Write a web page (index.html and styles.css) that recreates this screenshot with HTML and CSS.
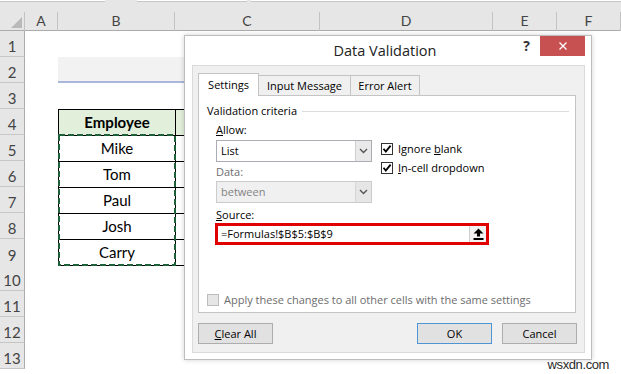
FILE: index.html
```html
<!DOCTYPE html>
<html lang="en">
<head>
    <meta charset="UTF-8">
    <meta name="viewport" content="width=device-width, initial-scale=1.0">
    <title>Data Validation</title>
    <link rel="stylesheet" href="styles.css">
</head>
<body>
    <div class="topbar">
        <span class="box name"></span>
        <span class="box fx"></span>
        <span class="box formula"></span>
    </div>

    <div class="sheet">
        <div class="row head">
            <div class="corner">
                <svg width="25" height="19" viewBox="0 0 25 19"><polygon points="22,5 22,16 11,16" fill="#b9b9b9"/></svg>
            </div>
            <div class="col">A</div>
            <div class="col">B</div>
            <div class="col">C</div>
            <div class="col">D</div>
            <div class="col">E</div>
            <div class="col">F</div>
        </div>
        <div class="row"><div class="num">1</div><div></div><div></div><div></div><div></div><div></div><div></div></div>
        <div class="row"><div class="num">2</div><div></div><div class="band"></div><div class="band"></div><div class="band"></div><div></div><div></div></div>
        <div class="row"><div class="num">3</div><div></div><div></div><div></div><div></div><div></div><div></div></div>
        <div class="row"><div class="num">4</div><div></div><div class="th">Employee</div><div class="th"></div><div></div><div></div><div></div></div>
        <div class="row"><div class="num">5</div><div></div><div class="td">Mike</div><div class="td"></div><div></div><div></div><div></div></div>
        <div class="row"><div class="num">6</div><div></div><div class="td">Tom</div><div class="td"></div><div></div><div></div><div></div></div>
        <div class="row"><div class="num">7</div><div></div><div class="td">Paul</div><div class="td"></div><div></div><div></div><div></div></div>
        <div class="row"><div class="num">8</div><div></div><div class="td">Josh</div><div class="td"></div><div></div><div></div><div></div></div>
        <div class="row"><div class="num">9</div><div></div><div class="td last">Carry</div><div class="td last"></div><div></div><div></div><div></div></div>
        <div class="row"><div class="num">10</div><div></div><div></div><div></div><div></div><div></div><div></div></div>
        <div class="row"><div class="num">11</div><div></div><div></div><div></div><div></div><div></div><div></div></div>
        <div class="row"><div class="num">12</div><div></div><div></div><div></div><div></div><div></div><div></div></div>
        <div class="row"><div class="num">13</div><div></div><div></div><div></div><div></div><div></div><div></div></div>
    </div>

    <!-- copy marquee around B5:B9 -->
    <div class="marquee">
        <svg width="118" height="132" viewBox="0 0 118 132"><rect x="1" y="1" width="116" height="130" fill="none" stroke="#1d6039" stroke-width="2" stroke-dasharray="6 3"/></svg>
    </div>

    <div class="dialog">
        <div class="titlebar">
            <span></span>
            <span class="caption">Data Validation</span>
            <div class="controls">
                <span class="help">?</span>
                <span class="close">
                    <svg width="8" height="8" viewBox="0 0 8 8"><path d="M0.5 0.5 L7.5 7.5 M7.5 0.5 L0.5 7.5" stroke="#fff" stroke-width="1.3"/></svg>
                </span>
            </div>
        </div>

        <div class="body">
            <div class="tabs">
                <span class="tab active settings">Settings</span>
                <span class="tab input">Input Message</span>
                <span class="tab error">Error Alert</span>
            </div>

            <div class="panel">
                <div class="group-title">Validation criteria</div>

                <div class="criteria">
                    <div class="fields">
                        <div class="label"><u>A</u>llow:</div>
                        <div class="select">
                            <span class="value">List</span>
                            <span class="arrow"><svg width="9" height="6" viewBox="0 0 9 6"><polyline points="1,1 4.5,4.5 8,1" fill="none" stroke="#555" stroke-width="1.4"/></svg></span>
                        </div>
                        <div class="label disabled">Data:</div>
                        <div class="select disabled">
                            <span class="value">between</span>
                            <span class="arrow"><svg width="9" height="6" viewBox="0 0 9 6"><polyline points="1,1 4.5,4.5 8,1" fill="none" stroke="#555" stroke-width="1.4"/></svg></span>
                        </div>
                    </div>
                    <div class="options">
                        <div class="check">
                            <span class="box"><svg width="10" height="10" viewBox="0 0 10 10"><path d="M1.5 4.8 L3.8 7.6 L8.6 1.6" fill="none" stroke="#000" stroke-width="1.8"/></svg></span>
                            Ignore&nbsp;<u>b</u>lank
                        </div>
                        <div class="check">
                            <span class="box"><svg width="10" height="10" viewBox="0 0 10 10"><path d="M1.5 4.8 L3.8 7.6 L8.6 1.6" fill="none" stroke="#000" stroke-width="1.8"/></svg></span>
                            <u>I</u>n-cell dropdown
                        </div>
                    </div>
                </div>

                <div class="source">
                    <div class="label"><u>S</u>ource:</div>
                    <div class="ref-input">
                        <span class="value">=Formulas!$B$5:$B$9</span>
                        <span class="collapse">
                            <svg width="11" height="12" viewBox="0 0 11 12"><polygon points="5.5,0.5 10.5,5.5 7,5.5 7,8.5 4,8.5 4,5.5 0.5,5.5" fill="#000"/><rect x="0.5" y="10" width="10" height="2" fill="#000"/></svg>
                        </span>
                    </div>
                </div>

                <div class="check apply">
                    <span class="box"></span>
                    Apply these changes to all other cells with the same settings
                </div>
            </div>

            <div class="buttons">
                <button class="btn"><u>C</u>lear All</button>
                <span class="spacer"></span>
                <button class="btn default">OK</button>
                <button class="btn">Cancel</button>
            </div>
        </div>
    </div>

    <div class="watermark">wsxdn.com</div>
</body>
</html>
```

FILE: styles.css
```css
* {
    box-sizing: border-box;
}

body {
    margin: 0;
    width: 621px;
    height: 374px;
    overflow: hidden;
    position: relative;
    background: #FFFFFF;
    font-family: Lato, sans-serif;
    color: #000000;
}

/* formula bar leftovers */
.topbar {
    display: flex;
    height: 12px;
    background: #E6E6E6;
}

.topbar .box {
    height: 2px;
    background: #FFFFFF;
    border-bottom: 1px solid #C6C6C6;
}

.box.name { width: 105px; }
.box.fx { width: 110px; margin-left: 32px; }
.box.formula { flex: 1; margin-left: 4px; }

/* sheet grid */
.row {
    display: grid;
    grid-template-columns: 25px 33px 117px 145px 173px 64px 64px;
    height: 26px;
}

.row.head {
    height: 19px;
    background: #E6E6E6;
    border-bottom: 1px solid #ABABAB;
}

.corner {
    border-right: 1px solid #C3C3C3;
}

.corner svg {
    display: block;
}

.col {
    border-right: 1px solid #C3C3C3;
    text-align: center;
    font-size: 14px;
    line-height: 18px;
    color: #444444;
}

.num {
    display: flex;
    align-items: flex-end;
    justify-content: center;
    background: #E6E6E6;
    border-right: 1px solid #ABABAB;
    border-bottom: 1px solid #C6C6C6;
    font-size: 15px;
    line-height: 18px;
    padding-bottom: 1px;
    color: #444444;
}

.band {
    background: #F2F2F2;
    border-bottom: 2px solid #A9B7DB;
}

.th, .td {
    border-left: 1px solid #000000;
    border-top: 1px solid #000000;
    text-align: center;
    font-size: 15px;
    line-height: 25px;
}

.th {
    background: #E2EFDA;
    font-weight: bold;
}

.td.last {
    border-bottom: 1px solid #000000;
}

.marquee {
    position: absolute;
    left: 58px;
    top: 134px;
    width: 118px;
    height: 132px;
}

.marquee svg {
    display: block;
}

/* dialog window */
.dialog {
    position: absolute;
    left: 184px;
    top: 35px;
    width: 408px;
    height: 325px;
    background: #FFFFFF;
    border: 1px solid #BDBDBD;
    box-shadow: 0 0 5px rgba(0, 0, 0, 0.18);
    font-family: 'Open Sans', sans-serif;
    font-size: 11px;
}

.titlebar {
    display: grid;
    grid-template-columns: 1fr auto 1fr;
    height: 29px;
    padding-right: 6px;
}

.caption {
    font-size: 14.5px;
    line-height: 29px;
    color: #222222;
}

.controls {
    display: flex;
    justify-content: flex-end;
    align-items: flex-start;
}

.help {
    font-size: 14px;
    font-weight: bold;
    line-height: 20px;
    color: #333333;
    margin-right: 10px;
}

.close {
    display: flex;
    align-items: center;
    justify-content: center;
    width: 45px;
    height: 20px;
    background: #C75050;
}

.body {
    height: 288px;
    margin: 0 6px 0 7px;
    padding: 7px 8px 0 5px;
    background: #F0F0F0;
    border: 1px solid #DADADA;
}

.tabs {
    display: flex;
    align-items: flex-end;
    height: 23px;
    margin-bottom: -1px;
    position: relative;
    z-index: 1;
}

.tab {
    height: 20px;
    margin-bottom: 1px;
    margin-left: -1px;
    border: 1px solid #C4C4C4;
    border-bottom: none;
    background: #F0F0F0;
    text-align: center;
    line-height: 19px;
}

.tab.active {
    height: 23px;
    margin-bottom: 0;
    margin-left: 0;
    background: #FFFFFF;
    line-height: 21px;
}

.tab.settings { width: 61px; }
.tab.input { width: 93px; }
.tab.error { width: 70px; }

.panel {
    height: 218px;
    padding: 7px 6px 0 8px;
    background: #FFFFFF;
    border: 1px solid #C4C4C4;
}

.group-title {
    display: flex;
    align-items: center;
    line-height: 16px;
}

.group-title::after {
    content: '';
    flex: 1;
    height: 1px;
    margin-left: 5px;
    background: #DCDCDC;
}

.criteria {
    display: flex;
    margin-left: 9px;
    margin-top: 3px;
}

.fields {
    width: 156px;
}

.label {
    line-height: 16px;
}

.label.disabled {
    color: #6D6D6D;
}

.select {
    display: flex;
    height: 22px;
    margin-top: 2px;
    margin-bottom: 2px;
    background: #FFFFFF;
    border: 1px solid #ABADB3;
}

.select .value {
    flex: 1;
    padding-left: 4px;
    line-height: 20px;
}

.select .arrow {
    display: flex;
    align-items: center;
    justify-content: center;
    width: 16px;
    background: #E9E9E9;
    border-left: 1px solid #CFCFCF;
}

.select.disabled {
    margin-top: 1px;
    background: #F0F0F0;
    border-color: #CCCCCC;
    color: #838383;
}

.select.disabled .arrow {
    background: #E6E6E6;
    border-left-color: #D5D5D5;
}

.options {
    margin-left: 9px;
    padding-top: 17px;
}

.check {
    display: flex;
    align-items: center;
    height: 19px;
}

.check .box {
    display: flex;
    align-items: center;
    justify-content: center;
    width: 12px;
    height: 12px;
    margin-right: 5px;
    background: #FFFFFF;
    border: 1px solid #333333;
}

.source {
    margin-left: 8px;
}

.source .label {
    margin-top: 2px;
    padding-left: 1px;
}

.ref-input {
    display: flex;
    width: 274px;
    height: 22px;
    background: #FFFFFF;
    border: 3px solid #E00000;
}

.ref-input .value {
    flex: 1;
    padding-left: 3px;
    line-height: 16px;
}

.collapse {
    display: flex;
    align-items: center;
    justify-content: center;
    width: 17px;
    background: #F2F2F2;
    border-left: 1px solid #CFCFCF;
}

.check.apply {
    margin-top: 45px;
    color: #6D6D6D;
}

.check.apply .box {
    background: #E6E6E6;
    border-color: #BCBCBC;
}

.buttons {
    display: flex;
    margin-top: 10px;
    margin-right: -1px;
}

.spacer {
    flex: 1;
}

.btn {
    width: 75px;
    height: 21px;
    padding: 0;
    background: #E1E1E1;
    border: 1px solid #ADADAD;
    font-family: 'Open Sans', sans-serif;
    font-size: 11px;
    color: #000000;
}

.btn.default {
    margin-right: 10px;
    border-color: #4F95D6;
}

.watermark {
    position: absolute;
    right: 12px;
    top: 357px;
    font-family: 'Liberation Sans', sans-serif;
    font-size: 13px;
    line-height: 15px;
    letter-spacing: -0.4px;
    color: #2B2B2B;
}
```
